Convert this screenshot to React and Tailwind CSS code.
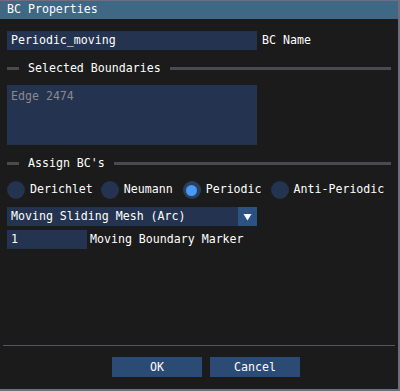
import { useState } from 'react';

const font = { fontFamily: '"DejaVu Sans Mono", "Liberation Mono", monospace' };

function SeparatorText({ label }) {
  return (
    <div className="flex items-center h-[14px]">
      <div className="w-[12px] h-[3px] bg-[#4b4a52]" />
      <span className="ml-[9px] mr-[9px] text-white leading-[14px]">{label}</span>
      <div className="flex-1 h-[3px] bg-[#4b4a52]" />
    </div>
  );
}

function Radio({ label, checked, onClick, className }) {
  return (
    <div className={'flex items-center cursor-pointer ' + (className || '')} onClick={onClick}>
      {checked ? (
        <div className="w-[18px] h-[18px] rounded-full bg-[#293f5e] flex items-center justify-center">
          <div className="w-[11px] h-[11px] rounded-full bg-[#4a98f7]" />
        </div>
      ) : (
        <div className="w-[18px] h-[18px] rounded-full bg-[#233350]" />
      )}
      <span className="ml-[5px] text-white">{label}</span>
    </div>
  );
}

export default function App() {
  const [bcType, setBcType] = useState('periodic');

  return (
    <div
      className="w-[400px] h-[391px] bg-[#1b1b1b] border-t border-r-2 border-b-2 border-[#6f6d80] flex flex-col text-[11.6px] overflow-hidden"
      style={font}
    >
      {/* Заголовок окна */}
      <div className="h-[18px] bg-[#3e6884] px-[7px] flex items-center text-white">
        BC Properties
      </div>

      <div className="px-[7px] pt-[12px] flex flex-col">
        <div className="flex items-center">
          <div className="w-[250px] h-[19px] bg-[#233350] px-[4px] flex items-center text-white">
            Periodic_moving
          </div>
          <span className="ml-[5px] text-white">BC Name</span>
        </div>

        <div className="mt-[11px]">
          <SeparatorText label="Selected Boundaries" />
        </div>

        <div className="mt-[10px] w-[250px] h-[60px] bg-[#233350] px-[4px] pt-[3px] text-[#8a8a8a]">
          Edge 2474
        </div>

        <div className="mt-[11px]">
          <SeparatorText label="Assign BC's" />
        </div>

        <div className="mt-[11px] flex items-center h-[18px]">
          <Radio label="Derichlet" checked={bcType === 'derichlet'} onClick={() => setBcType('derichlet')} />
          <Radio label="Neumann" className="ml-[8px]" checked={bcType === 'neumann'} onClick={() => setBcType('neumann')} />
          <Radio label="Periodic" className="ml-[10px]" checked={bcType === 'periodic'} onClick={() => setBcType('periodic')} />
          <Radio label="Anti-Periodic" className="ml-[9px]" checked={bcType === 'anti'} onClick={() => setBcType('anti')} />
        </div>

        <div className="mt-[8px] w-[250px] h-[19px] bg-[#233350] flex items-center">
          <span className="flex-1 pl-[4px] text-white">Moving Sliding Mesh (Arc)</span>
          <div className="w-[19px] h-[19px] bg-[#2c5283] flex items-center justify-center">
            <svg width="9" height="8" viewBox="0 0 9 8">
              <polygon points="0.5,1 8.5,1 4.5,7.5" fill="#ffffff" />
            </svg>
          </div>
        </div>

        <div className="mt-[4px] flex items-center">
          <div className="w-[80px] h-[19px] bg-[#233350] px-[4px] flex items-center text-white">1</div>
          <span className="ml-[3px] text-white">Moving Boundary Marker</span>
        </div>
      </div>

      <div className="flex-1" />

      <div className="mx-[3px] h-px bg-[#56545e]" />

      <div className="mt-[11px] mb-[12px] flex justify-center gap-[8px] pl-[14px]">
        <button className="w-[90px] h-[20px] bg-[#2b4b74] text-white leading-[20px]">OK</button>
        <button className="w-[90px] h-[20px] bg-[#2b4b74] text-white leading-[20px]">Cancel</button>
      </div>
    </div>
  );
}
